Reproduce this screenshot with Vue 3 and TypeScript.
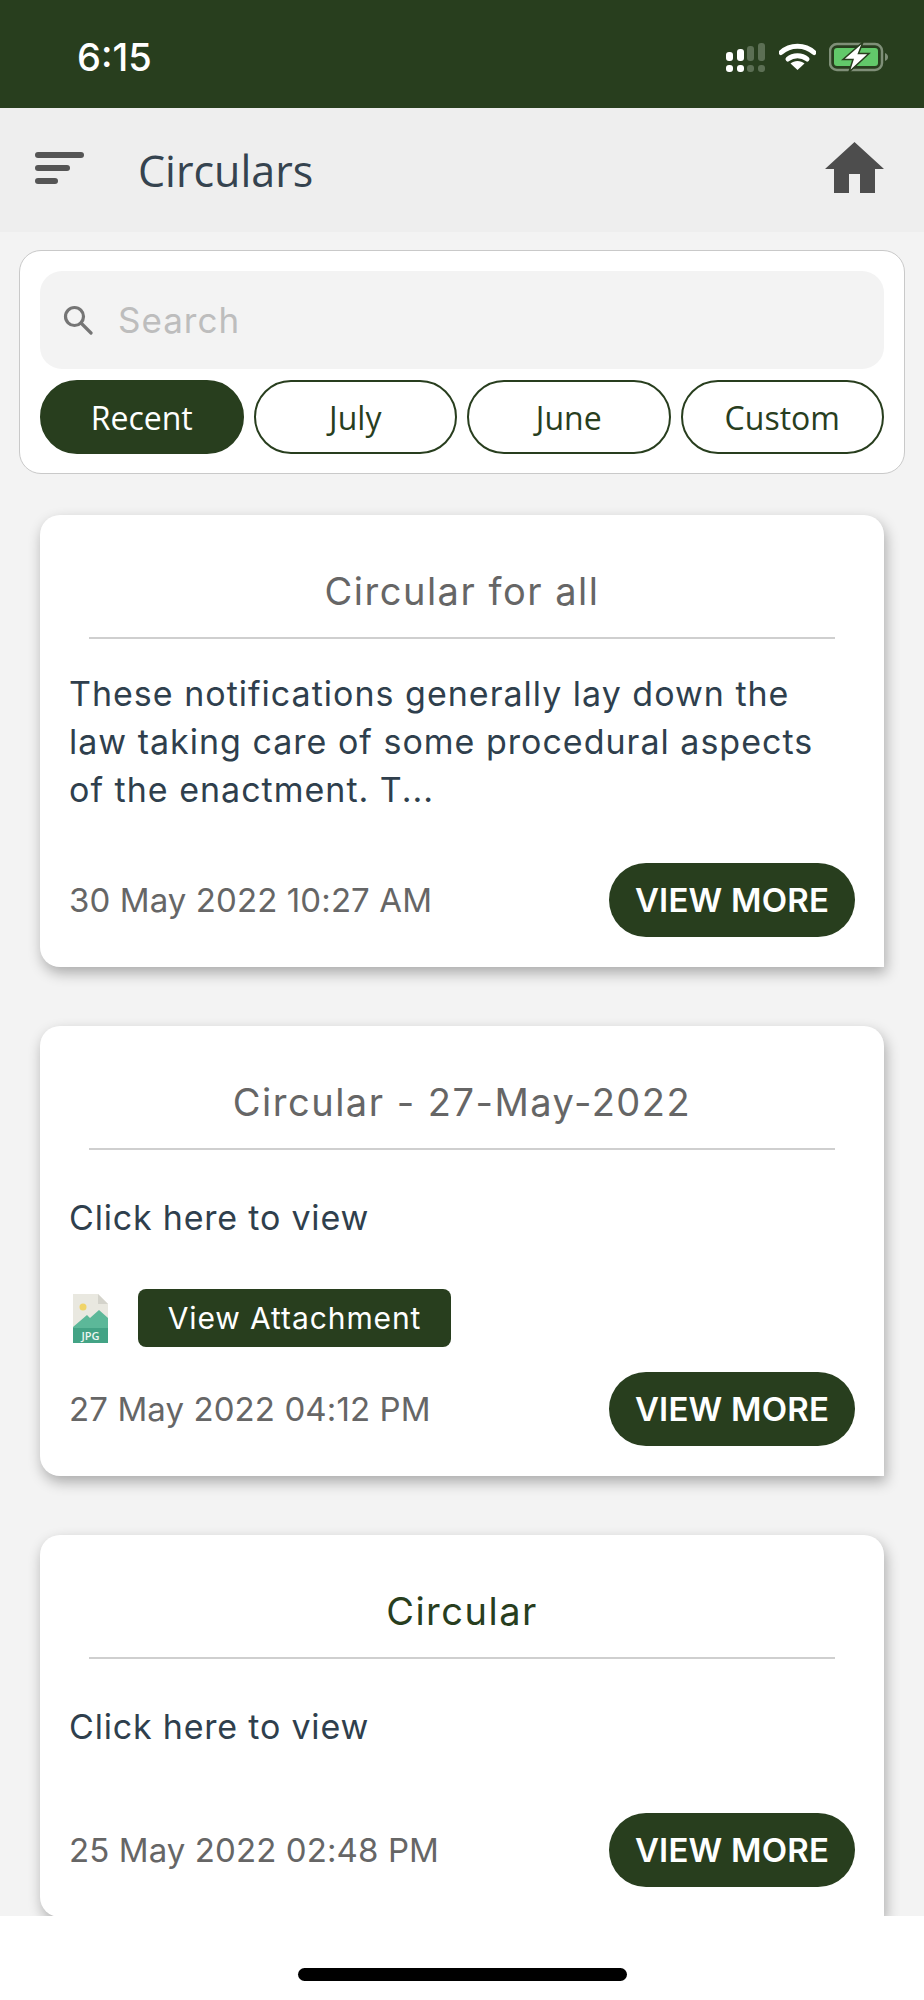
<template>
  <div class="screen">
    <!-- status bar -->
    <div class="status-bar">
      <span class="clock">6:15</span>
      <div class="status-icons">
        <svg class="signal" width="39" height="29" viewBox="0 0 39 29">
          <rect x="0" y="9" width="7" height="9" rx="3" fill="#fff"/>
          <rect x="11" y="6" width="7" height="12" rx="3" fill="#fff"/>
          <rect x="21" y="3" width="7" height="15" rx="3" fill="#5c6f54"/>
          <rect x="32" y="0" width="7" height="18" rx="3" fill="#5c6f54"/>
          <rect x="0" y="22" width="7" height="7" rx="3" fill="#fff"/>
          <rect x="11" y="22" width="7" height="7" rx="3" fill="#fff"/>
          <rect x="21" y="22" width="7" height="7" rx="3" fill="#5c6f54"/>
          <rect x="32" y="22" width="7" height="7" rx="3" fill="#5c6f54"/>
        </svg>
        <svg class="wifi" width="37" height="28" viewBox="0 0 37 28">
          <path d="M2 10.500C11 2 26 2 35 10.500" fill="none" stroke="#fff" stroke-width="5" stroke-linecap="round"/>
          <path d="M9 17C14 12.500 23 12.500 28 17" fill="none" stroke="#fff" stroke-width="5" stroke-linecap="round"/>
          <path d="M18.500 28L11.500 21.500C15 18 22 18 25.500 21.500Z" fill="#fff"/>
        </svg>
        <svg class="battery" width="60" height="30" viewBox="0 0 60 30">
          <rect x="1" y="2" width="52" height="26" rx="7" fill="none" stroke="#7f8f78" stroke-width="2.500"/>
          <rect x="5" y="6" width="44" height="18" rx="3" fill="#62c96a"/>
          <path d="M56 11C58 12 59 13 59 15C59 17 58 18 56 19Z" fill="#7f8f78"/>
          <path d="M34 0L14 17.500H24L20 30L40 11.500H29.500Z" fill="#fff" stroke="#283e1e" stroke-width="1.500"/>
        </svg>
      </div>
    </div>

    <!-- app header -->
    <header class="app-header">
      <div class="menu-icon"><i class="l1"></i><i class="l2"></i><i class="l3"></i></div>
      <h1 class="page-title">Circulars</h1>
      <svg class="home-icon" width="59" height="51" viewBox="0 0 59 51">
        <path d="M29.500 0L59 27H50V51H35V32H24V51H9V27H0Z" fill="#4d4d4d"/>
      </svg>
    </header>

    <main class="content">
      <section class="filter-card">
        <div class="search-box">
          <svg width="30" height="30" viewBox="0 0 30 30">
            <circle cx="11.500" cy="11.500" r="9" fill="none" stroke="#757575" stroke-width="3.200"/>
            <path d="M18 18L28 28" stroke="#757575" stroke-width="3.200" stroke-linecap="round"/>
          </svg>
          <span class="search-text">Search</span>
        </div>
        <div class="chips">
          <button v-for="(chip, i) in chips" :key="chip" class="chip" :class="{ active: i === 0 }">{{ chip }}</button>
        </div>
      </section>

      <article v-for="c in circulars" :key="c.date" class="circular" :class="c.kind">
        <h2 class="circular-title">{{ c.title }}</h2>
        <p class="circular-body" v-html="c.body"></p>
        <div v-if="c.kind === 'with-file'" class="attachment">
          <svg class="jpg-icon" width="35" height="49" viewBox="0 0 35 49">
            <path d="M0 0H25L35 10V49H0Z" fill="#e9e8e0"/>
            <path d="M25 0L35 10H25Z" fill="#d4d3cb"/>
            <circle cx="10" cy="13" r="3.500" fill="#f0d468"/>
            <path d="M0 33L14 21L17 24L26 16L35 24V49H0Z" fill="#5cb899"/>
            <path d="M0 34H35V49H0Z" fill="#43a385"/>
            <text x="17.500" y="46" text-anchor="middle" class="jpg-label">JPG</text>
          </svg>
          <button class="attach-btn">View Attachment</button>
        </div>
        <div class="circular-foot">
          <span class="circular-date">{{ c.date }}</span>
          <button class="more-btn">VIEW MORE</button>
        </div>
      </article>
    </main>

    <div class="home-bar-wrap"><div class="home-bar"></div></div>
  </div>
</template>

<script setup lang="ts">
const chips = ['Recent', 'July', 'June', 'Custom']

const circulars = [
  {
    title: 'Circular for all',
    body: 'These notifications generally lay down the<br>law taking care of some procedural aspects<br>of the enactment. T...',
    date: '30 May 2022 10:27 AM',
    kind: 'long'
  },
  {
    title: 'Circular - 27-May-2022',
    body: 'Click here to view',
    date: '27 May 2022 04:12 PM',
    kind: 'with-file'
  },
  {
    title: 'Circular',
    body: 'Click here to view',
    date: '25 May 2022 02:48 PM',
    kind: 'plain'
  }
]
</script>

<style>
html, body { margin: 0; background: #f3f3f3; }
</style>

<style scoped>
.screen {
  width: 924px; height: 2000px; overflow: hidden;
  display: flex; flex-direction: column;
  background: #f3f3f3;
  font-family: Inter, "Liberation Sans", sans-serif;
}
.status-bar {
  height: 108px; flex: none; box-sizing: border-box;
  background: #283e1e; color: #fff;
  display: flex; justify-content: space-between; align-items: flex-start;
  padding: 0 35px 0 77px;
}
.clock { font-size: 38px; font-weight: 500; line-height: 40px; margin-top: 37px; }
.status-icons { display: flex; align-items: flex-start; margin-top: 42px; }
.signal { margin-top: 1px; }
.wifi { margin-left: 14px; }
.battery { margin-left: 13px; }

.app-header {
  height: 124px; flex: none; box-sizing: border-box;
  background: #eeeeee;
  display: flex; align-items: center;
  padding: 0 40px 0 35px;
}
.menu-icon { width: 49px; display: flex; flex-direction: column; gap: 7px; margin-top: -4px; }
.menu-icon i { display: block; height: 6px; border-radius: 3px; background: #555; }
.menu-icon .l1 { width: 49px; }
.menu-icon .l2 { width: 35px; }
.menu-icon .l3 { width: 23px; }
.page-title {
  flex: 1; margin: 2px 0 0 54px;
  font: 500 43px/50px "Open Sans", sans-serif;
  color: #35434f;
}
.home-icon { margin-top: -5px; }

.content { flex: 1; min-height: 0; overflow: hidden; padding: 18px 19px 0; }
.filter-card {
  background: #fff; border: 1px solid #c9c9c9; border-radius: 22px;
  padding: 20px; display: flex; flex-direction: column; gap: 11px;
  box-sizing: border-box; height: 224px;
}
.search-box {
  height: 98px; flex: none; box-sizing: border-box;
  background: #f3f3f3; border-radius: 22px;
  display: flex; align-items: center; gap: 25px;
  padding: 0 0 0 23px;
}
.search-text { font-size: 35px; letter-spacing: 1px; color: #bdbdbd; }
.chips { display: grid; grid-template-columns: repeat(4, 1fr); gap: 10px; }
.chip {
  height: 74px; box-sizing: border-box; padding: 0;
  border: 2px solid #283e1e; border-radius: 37px;
  background: #fff; color: #283e1e;
  font: 400 32px "Open Sans", sans-serif;
}
.chip.active { background: #283e1e; color: #fff; }

.circular {
  margin: 41px 21px 0; box-sizing: border-box;
  background: #fff; border-radius: 20px 20px 0 20px;
  padding: 0 29px 30px 29px;
  box-shadow: 2px 6px 14px rgba(0, 0, 0, 0.3);
}
.circular + .circular { margin-top: 59px; }
.circular-title {
  margin: 0 20px; height: 124px; box-sizing: border-box;
  padding-top: 50px;
  border-bottom: 2px solid #cfcfcf;
  text-align: center;
  font-size: 38px; line-height: 52px; font-weight: 400; letter-spacing: 1.500px;
  color: #666;
}
.plain .circular-title { color: #283e1e; }
.circular-body {
  margin: 31px 0 0;
  font-size: 34px; line-height: 48px; letter-spacing: 1px; color: #2f3f4d;
}
.with-file .circular-body, .plain .circular-body { margin-top: 44px; letter-spacing: 0.800px; }
.circular-foot { display: flex; justify-content: space-between; align-items: center; margin-top: 49px; }
.circular-date { font-size: 33px; letter-spacing: 0.100px; color: #666; }
.more-btn {
  width: 246px; height: 74px; padding: 0; border: 0; border-radius: 37px;
  background: #283e1e; color: #fff;
  font: 600 33px Inter, sans-serif; letter-spacing: 0.200px;
}
.attachment { display: flex; align-items: center; margin-top: 47px; padding-left: 4px; }
.jpg-label { font: 600 11px "Open Sans", sans-serif; fill: #eef6f2; }
.attach-btn {
  margin-left: 30px; width: 313px; height: 58px; padding: 0;
  border: 0; border-radius: 8px;
  background: #283e1e; color: #fff;
  font: 400 30px Inter, sans-serif; letter-spacing: 0.900px;
}
.with-file .circular-foot { margin-top: 25px; }
.plain .circular-foot { margin-top: 62px; }

.home-bar-wrap { height: 84px; flex: none; background: #fff; position: relative; }
.home-bar {
  position: absolute; left: 298px; top: 52px;
  width: 329px; height: 13px; border-radius: 7px; background: #000;
}
</style>
